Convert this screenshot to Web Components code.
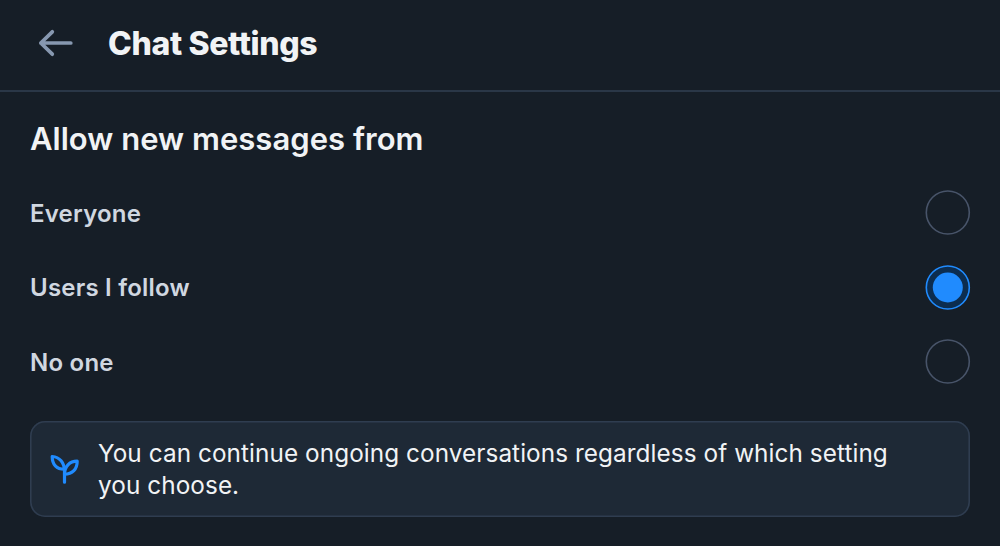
<!DOCTYPE html>
<html lang="en">
<head>
<meta charset="utf-8">
<title>Chat Settings</title>
<style>
  body {
    margin: 0;
    background: #161e27;
    color: #f1f3f5;
    font-family: Inter, "Liberation Sans", sans-serif;
  }
</style>
</head>
<body>
<chat-settings></chat-settings>

<script>
class ScreenHeader extends HTMLElement {
  constructor() {
    super();
    this.attachShadow({ mode: "open" });
  }

  connectedCallback() {
    this.shadowRoot.innerHTML = `
      <style>
        :host {
          display: flex;
          align-items: center;
          gap: 34px;
          box-sizing: border-box;
          height: 92px;
          padding: 0 30px 5px 37px;
          border-bottom: 2px solid #2a3747;
        }
        button {
          display: flex;
          padding: 0;
          border: none;
          background: none;
          color: #8798b0;
          cursor: pointer;
        }
        h1 {
          margin: 0;
          padding-top: 2px;
          font-size: 32px;
          line-height: 42px;
          font-weight: 800;
          letter-spacing: -0.35px;
        }
      </style>
      <button type="button" aria-label="Back">
        <svg width="37" height="30" viewBox="0 0 37 30" fill="none" stroke="currentColor"
          stroke-width="3.7" stroke-linecap="round" stroke-linejoin="round">
          <path d="M15.3 3.8 3.8 15l11.5 11.2M3.8 15h30" />
        </svg>
      </button>
      <h1><slot></slot></h1>
    `;
  }
}

class RadioOption extends HTMLElement {
  constructor() {
    super();
    this.attachShadow({ mode: "open" });
  }

  connectedCallback() {
    this.setAttribute("role", "radio");
    this.setAttribute("aria-checked", this.hasAttribute("checked"));
    this.shadowRoot.innerHTML = `
      <style>
        :host {
          display: flex;
          align-items: center;
          justify-content: space-between;
          color: #d0d7e0;
          font-size: 24px;
          line-height: 32px;
          font-weight: 600;
          letter-spacing: 0.22px;
          cursor: pointer;
        }
        span {
          padding-top: 2px;
        }
        svg {
          display: block;
          overflow: visible;
        }
        .ring {
          fill: none;
          stroke: #485469;
          stroke-width: 1.6;
        }
        .dot {
          fill: none;
        }
        :host([checked]) .ring {
          fill: #0c2d50;
          stroke: #208bfe;
        }
        :host([checked]) .dot {
          fill: #208bfe;
        }
      </style>
      <span><slot></slot></span>
      <svg width="45" height="45" viewBox="0 0 45 45">
        <circle class="ring" cx="22.8" cy="22.5" r="21.5" />
        <circle class="dot" cx="22.8" cy="22.5" r="15" />
      </svg>
    `;
  }
}

class InfoNote extends HTMLElement {
  constructor() {
    super();
    this.attachShadow({ mode: "open" });
  }

  connectedCallback() {
    this.shadowRoot.innerHTML = `
      <style>
        :host {
          display: flex;
          align-items: center;
          gap: 16px;
          box-sizing: border-box;
          height: 96px;
          padding: 0 50px 0 18px;
          border-radius: 15px;
          background: #1e2936;
          box-shadow: inset 0 0 0 1.6px #2f3d50;
          font-size: 24.3px;
          line-height: 32px;
          letter-spacing: 0.08px;
        }
        svg {
          flex: none;
          color: #208bfe;
        }
      </style>
      <svg width="34" height="34" viewBox="0 0 34 34" fill="none" stroke="currentColor"
        stroke-width="3.2" stroke-linecap="round" stroke-linejoin="round">
        <path d="M16.5 30.2V19.5C16.5 10.5 11.5 5 4.2 4.5 4.2 12.5 8.5 17.2 16.5 17.2" />
        <path d="M16.5 22.2C16.5 14.5 21.5 9.2 29.2 9.2 29.2 17 24.5 22.2 16.5 22.2Z" />
      </svg>
      <span><slot></slot></span>
    `;
  }
}

class ChatSettings extends HTMLElement {
  constructor() {
    super();
    this.attachShadow({ mode: "open" });
  }

  connectedCallback() {
    this.render();
    this.attachEventListeners();
  }

  render() {
    this.shadowRoot.innerHTML = `
      <style>
        :host {
          display: block;
          min-height: 546px;
        }
        main {
          padding: 26px 30px 29px;
        }
        h2 {
          margin: 0 0 30px;
          font-size: 31px;
          line-height: 42px;
          font-weight: 600;
          letter-spacing: 0.03px;
        }
        .options {
          display: grid;
          gap: 29.5px;
          margin-bottom: 37px;
        }
      </style>
      <screen-header>Chat Settings</screen-header>
      <main>
        <h2>Allow new messages from</h2>
        <div class="options" role="radiogroup">
          <radio-option>Everyone</radio-option>
          <radio-option checked>Users I follow</radio-option>
          <radio-option>No one</radio-option>
        </div>
        <info-note>You can continue ongoing conversations regardless of which setting you choose.</info-note>
      </main>
    `;
  }

  attachEventListeners() {
    const options = this.shadowRoot.querySelectorAll("radio-option");

    options.forEach((option) => {
      option.addEventListener("click", () => {
        options.forEach((other) => {
          other.toggleAttribute("checked", other === option);
          other.setAttribute("aria-checked", other === option);
        });
      });
    });
  }
}

customElements.define("screen-header", ScreenHeader);
customElements.define("radio-option", RadioOption);
customElements.define("info-note", InfoNote);
customElements.define("chat-settings", ChatSettings);
</script>
</body>
</html>
